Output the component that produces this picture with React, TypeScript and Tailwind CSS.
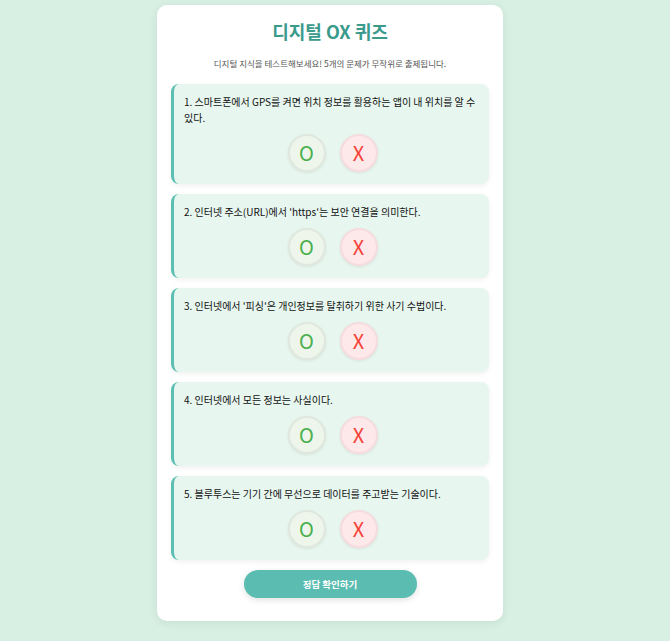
import React, { useState } from 'react';

// Quiz questions shown in the card
const questions = [
  '1. 스마트폰에서 GPS를 켜면 위치 정보를 활용하는 앱이 내 위치를 알 수 있다.',
  "2. 인터넷 주소(URL)에서 'https'는 보안 연결을 의미한다.",
  "3. 인터넷에서 '피싱'은 개인정보를 탈취하기 위한 사기 수법이다.",
  '4. 인터넷에서 모든 정보는 사실이다.',
  '5. 블루투스는 기기 간에 무선으로 데이터를 주고받는 기술이다.',
];

const font = { fontFamily: '"Noto Sans CJK KR", "Noto Sans", sans-serif' };

const App = () => {
  const [answers, setAnswers] = useState<Record<number, 'O' | 'X'>>({});

  const pick = (i: number, v: 'O' | 'X') => setAnswers((a) => ({ ...a, [i]: v }));

  return (
    <div className="min-h-[641px] w-full bg-[#d8f0e4] pt-[5px] pr-[10px]" style={font}>
      <div className="mx-auto w-[346px] rounded-[10px] bg-white px-[14px] pt-[14px] pb-[23px] shadow-[0_2px_10px_rgba(0,0,0,0.08)]">
        <h1 className="text-center text-[18px] font-bold leading-[24px] text-[#3a9a8c]">디지털 OX 퀴즈</h1>
        <p className="mt-[14px] text-center text-[8.5px] leading-[12px] text-[#555]">
          디지털 지식을 테스트해보세요! 5개의 문제가 무작위로 출제됩니다.
        </p>

        <div className="mt-[15px] flex flex-col gap-[10px]">
          {questions.map((q, i) => (
            <div
              key={i}
              className="rounded-[8px] border-l-[3px] border-[#5bbfb3] bg-[#e7f6ef] pt-[10px] pr-[8px] pb-[12px] pl-[10px] shadow-[0_2px_5px_rgba(0,0,0,0.06)]"
            >
              <p className="text-[10px] leading-[16px] text-[#111]">{q}</p>
              <div className="mt-[8px] flex justify-center gap-[14px]">
                <button
                  onClick={() => pick(i, 'O')}
                  className={`flex h-[38px] w-[38px] items-center justify-center rounded-full border-2 border-[#e0e8de] bg-[#eef6eb] text-[20px] leading-none text-[#4caf50] shadow-[0_1px_3px_rgba(0,0,0,0.08)] ${answers[i] === 'O' ? 'ring-2 ring-[#4caf50]' : ''}`}
                >
                  O
                </button>
                <button
                  onClick={() => pick(i, 'X')}
                  className={`flex h-[38px] w-[38px] items-center justify-center rounded-full border-2 border-[#f6dcdf] bg-[#fde8ea] text-[20px] leading-none text-[#f44336] shadow-[0_1px_3px_rgba(0,0,0,0.08)] ${answers[i] === 'X' ? 'ring-2 ring-[#f44336]' : ''}`}
                >
                  X
                </button>
              </div>
            </div>
          ))}
        </div>

        <div className="mt-[10px] flex justify-center">
          <button className="h-[28px] w-[173px] rounded-full bg-[#5bbdb1] text-[9.5px] font-bold text-white shadow-[0_2px_6px_rgba(0,0,0,0.12)]">
            정답 확인하기
          </button>
        </div>
      </div>
    </div>
  );
};

export default App;
